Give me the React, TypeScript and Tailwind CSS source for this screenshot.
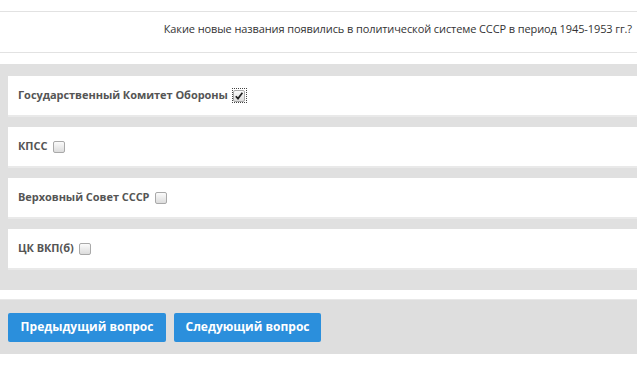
const answers = [
  { label: "Государственный Комитет Обороны", checked: true },
  { label: "КПСС", checked: false },
  { label: "Верховный Совет СССР", checked: false },
  { label: "ЦК ВКП(б)", checked: false },
];

function Box({ checked }: { checked: boolean }) {
  return (
    <span
      className={
        "ml-[5px] inline-flex items-center justify-center w-[13px] h-[13px] " +
        (checked ? "outline outline-1 outline-dotted outline-[#444] outline-offset-[0px]" : "")
      }
    >
      <span className="flex items-center justify-center w-[12px] h-[12px] rounded-[2px] border border-[#a9a9a9] bg-gradient-to-b from-[#fbfbfb] to-[#dcdcdc]">
        {checked && (
          <svg width="10" height="10" viewBox="0 0 10 10">
            <path d="M1.8 5.2 L4 7.6 L8.4 1.8" fill="none" stroke="#222" strokeWidth="1.7" />
          </svg>
        )}
      </span>
    </span>
  );
}

export default function App() {
  return (
    <div className="w-[637px] h-[376px] overflow-hidden bg-white font-['Open_Sans',sans-serif]">
      <div className="h-[12px] border-b border-[#e2e2e2]" />
      <div className="h-[41px] flex items-center justify-end pr-[5px] pb-[5px] text-[11px] tracking-[-0.1px] text-[#333] border-b border-[#e2e2e2] whitespace-nowrap">
        Какие новые названия появились в политической системе СССР в период 1945-1953 гг.?
      </div>
      <div className="h-[11px]" />
      <div className="bg-[#e0e0e0] pt-3 pb-[22px] pl-2 flex flex-col gap-3">
        {answers.map((a) => (
          <div
            key={a.label}
            className="h-[39px] bg-white flex items-center pl-[10px] text-[11px] font-bold tracking-[-0.05px] text-[#555] shadow-[0_2px_0_#e9e9e9]"
          >
            <span>{a.label}</span>
            <Box checked={a.checked} />
          </div>
        ))}
      </div>
      <div className="h-[10px] border-b border-[#e8e8e8]" />
      <div className="bg-[#dedede] h-[54px] flex items-center gap-2 px-2">
        <button className="w-[158px] h-[29px] rounded-[2px] bg-[#2b8fdc] text-white text-[12px] font-bold">
          Предыдущий вопрос
        </button>
        <button className="w-[147px] h-[29px] rounded-[2px] bg-[#2b8fdc] text-white text-[12px] font-bold">
          Следующий вопрос
        </button>
      </div>
    </div>
  );
}
